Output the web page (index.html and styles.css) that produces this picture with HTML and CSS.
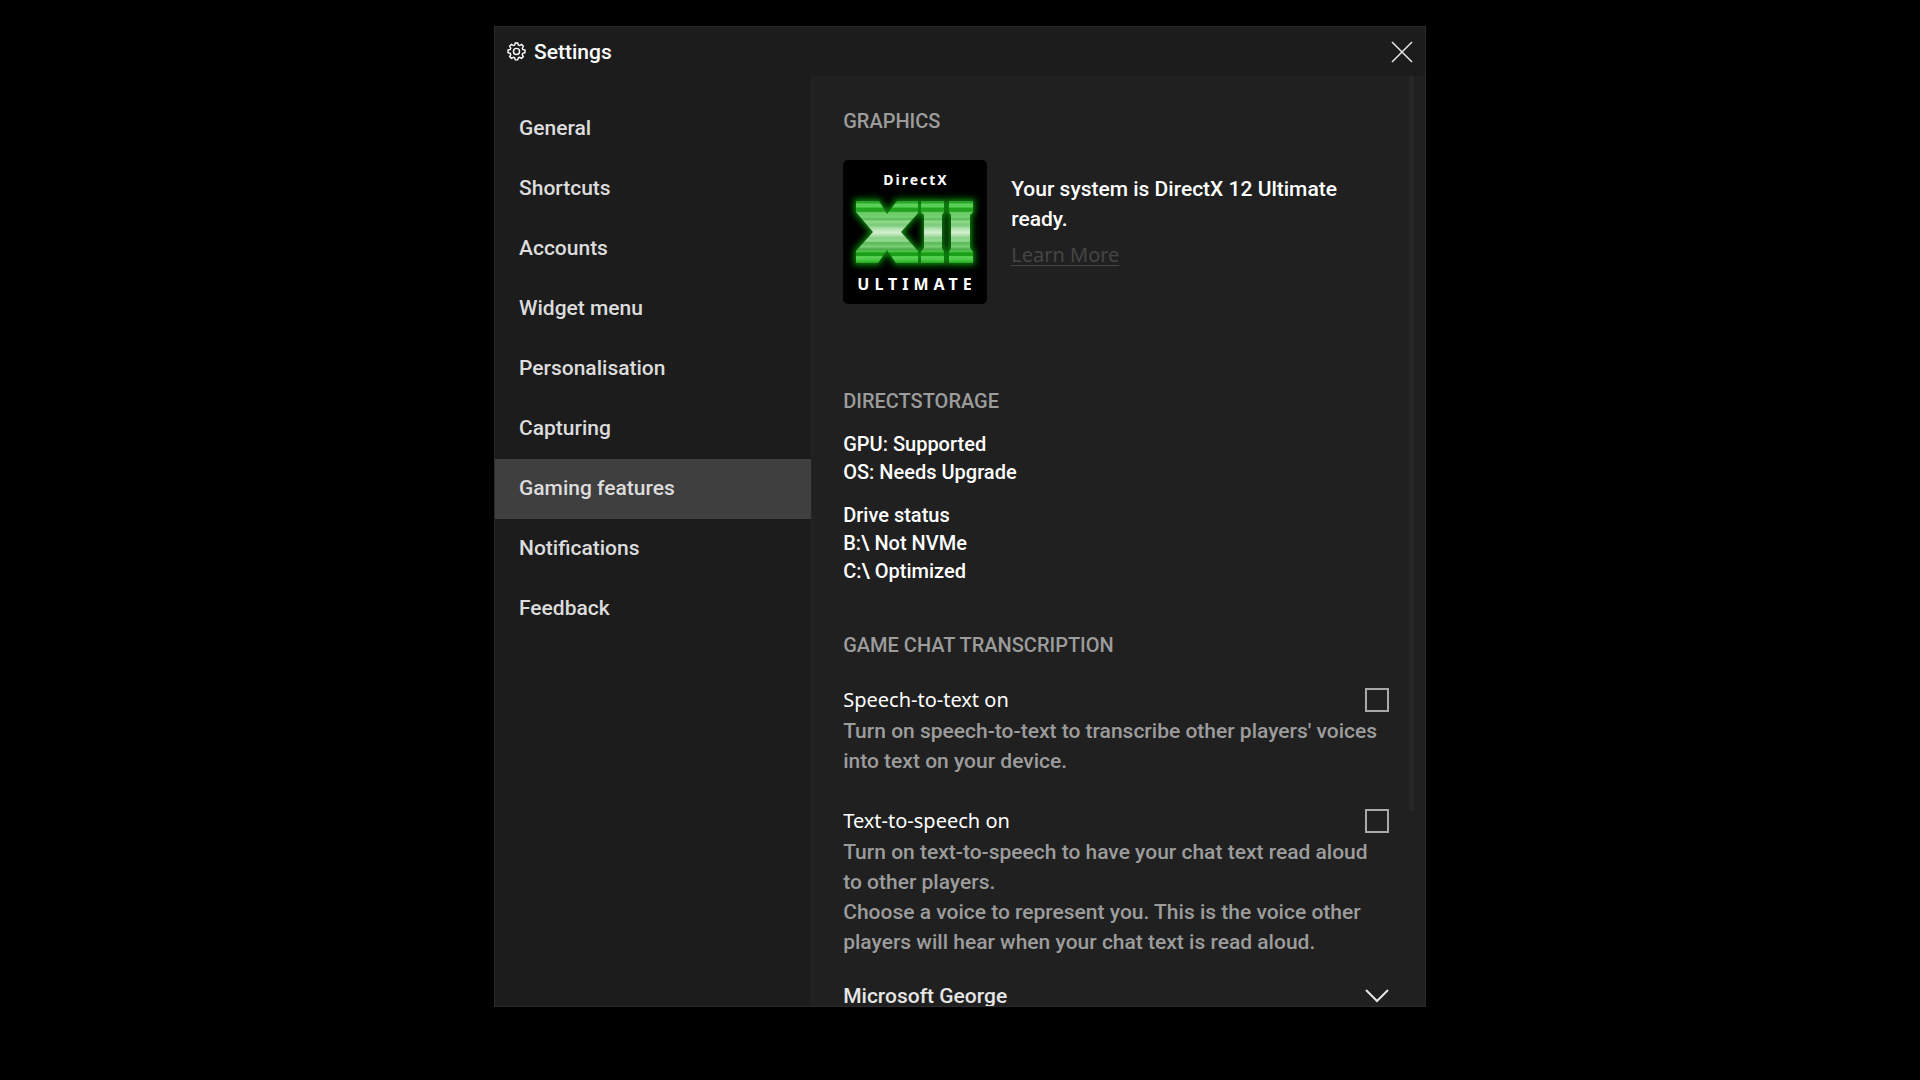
FILE: index.html
```html
<!DOCTYPE html>
<html lang="en-GB">
<head>
<meta charset="utf-8">
<meta name="viewport" content="width=device-width, initial-scale=1">
<title>Settings</title>
<link rel="stylesheet" href="styles.css">
</head>
<body>
<main class="window">
  <header class="titlebar">
    <svg class="gear" viewBox="1 0 16 17" aria-hidden="true">
      <path d="M7.400 2.600 8 .8h2l.6 1.800 1 .4 1.700-.9 1.500 1.500-.9 1.700.4 1 1.900.6v2.200l-1.900.6-.4 1 .9 1.700-1.500 1.500-1.700-.9-1 .4-.6 1.800H8l-.6-1.800-1-.4-1.700.9-1.500-1.500.9-1.700-.4-1-1.900-.6V6.900l1.900-.6.4-1-.9-1.700 1.500-1.500 1.700.9z"/>
      <circle cx="9" cy="8" r="2.600"/>
    </svg>
    <h1 class="title">Settings</h1>
    <button class="close" type="button" aria-label="Close">
      <svg viewBox="0 0 22 22" aria-hidden="true"><path d="M1 1 21 21M21 1 1 21"/></svg>
    </button>
  </header>
  <div class="body">
    <nav class="sidebar" aria-label="Settings sections">
      <a class="nav-item" href="#general">General</a>
      <a class="nav-item" href="#shortcuts">Shortcuts</a>
      <a class="nav-item" href="#accounts">Accounts</a>
      <a class="nav-item" href="#widget-menu">Widget menu</a>
      <a class="nav-item" href="#personalisation">Personalisation</a>
      <a class="nav-item" href="#capturing">Capturing</a>
      <a class="nav-item nav-item-active" href="#gaming-features" aria-current="page">Gaming features</a>
      <a class="nav-item" href="#notifications">Notifications</a>
      <a class="nav-item" href="#feedback">Feedback</a>
    </nav>
    <div class="content">
      <section class="graphics">
        <h2 class="heading">GRAPHICS</h2>
        <div class="directx">
          <svg class="badge" viewBox="0 0 144 144" role="img" aria-label="DirectX 12 Ultimate">
            <defs>
              <linearGradient id="bands" x1="0" y1="40" x2="0" y2="103" gradientUnits="userSpaceOnUse">
                <stop offset="0" stop-color="#2aa52a"/><stop offset=".05" stop-color="#2aa52a"/>
                <stop offset=".06" stop-color="#59cf55"/><stop offset=".11" stop-color="#59cf55"/>
                <stop offset=".13" stop-color="#22a41f"/><stop offset=".18" stop-color="#22a41f"/>
                <stop offset=".2" stop-color="#6bcc68"/><stop offset=".28" stop-color="#74d071"/>
                <stop offset=".3" stop-color="#55b653"/><stop offset=".34" stop-color="#8edb8b"/>
                <stop offset=".4" stop-color="#7bcb78"/><stop offset=".46" stop-color="#b5e4b2"/>
                <stop offset=".52" stop-color="#d3efd0"/><stop offset=".57" stop-color="#a5dca2"/>
                <stop offset=".6" stop-color="#8ad087"/><stop offset=".65" stop-color="#92db8f"/>
                <stop offset=".68" stop-color="#58b956"/><stop offset=".74" stop-color="#78d075"/>
                <stop offset=".78" stop-color="#4cab4a"/><stop offset=".82" stop-color="#4bc447"/>
                <stop offset=".84" stop-color="#1a9e18"/><stop offset=".88" stop-color="#1a9e18"/>
                <stop offset=".9" stop-color="#5bd557"/><stop offset=".95" stop-color="#4bc747"/>
                <stop offset="1" stop-color="#20a81d"/>
              </linearGradient>
              <filter id="glow" x="-20%" y="-30%" width="140%" height="160%"><feGaussianBlur stdDeviation="3"/></filter>
              <path id="xii" d="M13 41H36L44 54 54 41H75V53L58 72 75 91V103H53L44 90 35 103H13V91L30 72 13 52ZM78 41H101V52L99 55V88L101 92V103H78V92L81 88V55L78 52ZM106 41H130V52L127 55V88L130 92V103H106V92L108 88V55L106 52Z"/>
            </defs>
            <rect class="badge-back" width="144" height="144" rx="5"/>
            <use class="glow" href="#xii" filter="url(#glow)"/>
            <use class="numeral" href="#xii"/>
            <text class="badge-name" x="73" y="25">DirectX</text>
            <text class="badge-tier" x="74" y="130">ULTIMATE</text>
          </svg>
          <div class="directx-info">
            <p class="ready">Your system is DirectX 12 Ultimate ready.</p>
            <a class="learn" href="#learn-more">Learn More</a>
          </div>
        </div>
      </section>
      <section class="storage">
        <h2 class="heading">DIRECTSTORAGE</h2>
        <p class="status">GPU: Supported<br>OS: Needs Upgrade</p>
        <p class="status">Drive status<br>B:\ Not NVMe<br>C:\ Optimized</p>
      </section>
      <section class="transcription">
        <h2 class="heading">GAME CHAT TRANSCRIPTION</h2>
        <div class="option">
          <div class="option-row">
            <label class="option-label" for="stt">Speech-to-text on</label>
            <input class="check" id="stt" type="checkbox">
          </div>
          <p class="hint">Turn on speech-to-text to transcribe other players' voices into text on your device.</p>
        </div>
        <div class="option">
          <div class="option-row">
            <label class="option-label" for="tts">Text-to-speech on</label>
            <input class="check" id="tts" type="checkbox">
          </div>
          <p class="hint">Turn on text-to-speech to have your chat text read aloud to other players.</p>
          <p class="hint">Choose a voice to represent you. This is the voice other players will hear when your chat text is read aloud.</p>
        </div>
        <div class="voice">
          <select class="voice-select" aria-label="Voice">
            <option>Microsoft George</option>
          </select>
          <svg class="chevron" viewBox="0 0 24 14" aria-hidden="true"><path d="M1 1 12 12 23 1"/></svg>
        </div>
      </section>
    </div>
    <div class="track"><div class="thumb"></div></div>
  </div>
</main>
</body>
</html>
```

FILE: styles.css
```css
* { box-sizing: border-box; }

body {
  margin: 0;
  height: 100vh;
  padding: 26px 16px 73px;
  background: #000;
  color: #fff;
  font: 500 21px/30px Roboto, sans-serif;
}

h1, h2, p { margin: 0; font: inherit; }

.window {
  display: flex;
  flex-direction: column;
  width: 100%;
  max-width: 932px;
  height: 100%;
  margin: 0 auto;
  border: 1px solid #2a2a2a;
  background: #1c1c1c;
  overflow: hidden;
}

.titlebar {
  display: flex;
  align-items: center;
  flex: none;
  height: 49px;
  padding: 0 12px;
}

.gear {
  width: 19px;
  height: 20px;
  margin-right: 8px;
  fill: none;
  stroke: #fff;
  stroke-width: 1.2;
}

.title { flex: 1; }

.close {
  display: flex;
  padding: 0;
  border: 0;
  background: none;
}

.close svg {
  width: 22px;
  height: 22px;
  stroke: #e8e8e8;
  stroke-width: 1.5;
}

.body {
  display: flex;
  flex: 1;
  min-height: 0;
}

.sidebar {
  flex: 0 0 34%;
  padding-top: 23px;
}

.nav-item {
  display: flex;
  align-items: center;
  height: 60px;
  padding: 0 24px 2px;
  color: #dcdcdc;
  text-decoration: none;
}

.nav-item-active { background: #3f3f3f; }

.content {
  flex: 1;
  min-width: 0;
  padding: 30px 20px 0 31px;
  border-left: 1px solid #242424;
  background: #202020;
  overflow: hidden;
}

.track {
  flex: none;
  width: 16px;
  background: #202020;
}

.thumb {
  width: 5px;
  height: 79%;
  background: #272727;
}

.heading {
  color: #9c9c9c;
  font-size: 20px;
}

.directx {
  display: flex;
  gap: 24px;
  margin-top: 24px;
}

.badge {
  flex: none;
  width: 144px;
  height: 144px;
}

.badge-back { fill: #000; }
.numeral { fill: url(#bands); }
.glow { fill: #0a8a0a; stroke: #0a8a0a; stroke-width: 4; }

.badge-name, .badge-tier {
  fill: #fff;
  font-family: "Noto Sans", sans-serif;
  font-weight: 700;
  text-anchor: middle;
}

.badge-name { font-size: 14px; letter-spacing: 2px; }
.badge-tier { font-size: 16px; letter-spacing: 5px; }

.directx-info { padding-top: 14px; }

.learn {
  display: inline-block;
  margin-top: 6px;
  color: #454545;
  font-family: "Noto Sans", sans-serif;
  font-size: 20px;
  font-weight: 400;
  text-underline-offset: 3px;
  text-decoration-thickness: 1px;
}

.storage { margin-top: 82px; }

.status {
  margin-bottom: 15px;
  font-size: 20px;
  line-height: 28px;
}

.storage .heading { margin-bottom: 14px; }

.transcription { margin-top: 45px; }

.option { margin-top: 24px; }
.option + .option { margin-top: 29px; }

.option-row {
  display: flex;
  align-items: center;
  justify-content: space-between;
  height: 32px;
}

.option-label {
  font-family: "Noto Sans", sans-serif;
  font-size: 20px;
  font-weight: 400;
}

.check {
  appearance: none;
  width: 24px;
  height: 24px;
  margin: 0;
  border: 2px solid #a9a9a9;
}

.hint { color: #9c9c9c; }

.voice {
  display: flex;
  align-items: center;
  margin-top: 24px;
}

.voice-select {
  appearance: none;
  flex: 1;
  min-width: 0;
  height: 30px;
  padding: 0;
  border: 0;
  background: none;
  color: #e6e6e6;
  font: inherit;
}

.chevron {
  flex: none;
  width: 24px;
  height: 14px;
  fill: none;
  stroke: #e6e6e6;
  stroke-width: 2;
}
```
